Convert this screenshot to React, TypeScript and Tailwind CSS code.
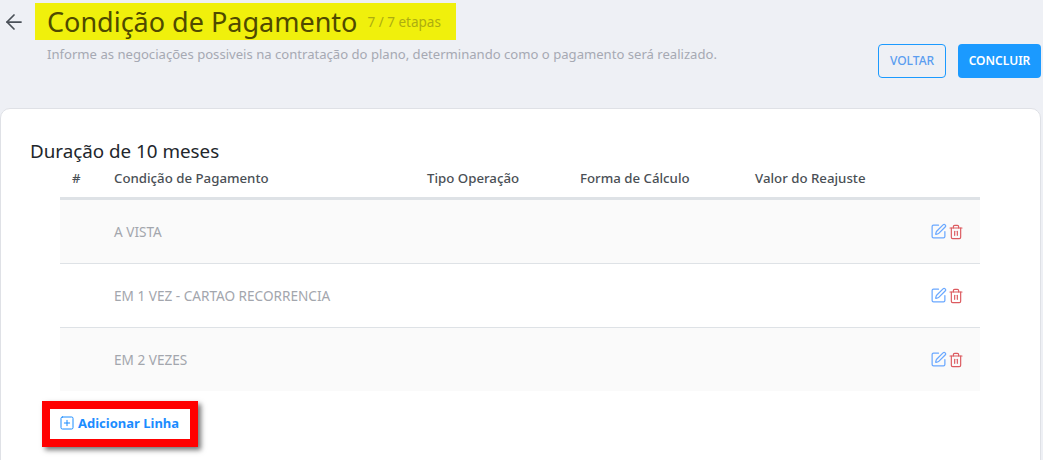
import { ArrowLeft, SquarePen, Trash2, SquarePlus } from 'lucide-react';

const rows = ['A VISTA', 'EM 1 VEZ - CARTAO RECORRENCIA', 'EM 2 VEZES'];

const gridCols = 'grid grid-cols-[42px_313px_153px_175px_1fr_70px] items-center';

export default function App() {
  return (
    <div className="w-[1043px] h-[460px] overflow-hidden bg-[#eef0f5] font-['Noto_Sans',sans-serif]">
      {/* Page header */}
      <div className="h-[108px] flex pt-[3px]">
        <ArrowLeft className="size-[24px] mt-[7px] ml-[2px] text-[#4a5058]" strokeWidth={1.75} />
        <div className="ml-[9px] w-[676px]">
          <div className="w-[421px] h-[37px] bg-[#f0f00c] pl-[12px] flex items-center">
            <h1 className="text-[27px] leading-none text-[#4f4a00]">Condição de Pagamento</h1>
            <span className="ml-[10px] mt-[1px] text-[13.5px] text-[#adad10]">7 / 7 etapas</span>
          </div>
          <p className="mt-[5px] ml-[12px] whitespace-nowrap text-[13.1px] text-[#a6a9b3]">
            Informe as negociações possiveis na contratação do plano, determinando como o pagamento será realizado.
          </p>
        </div>
        <div className="ml-[167px] mt-[41px] flex gap-[12px] items-start">
          <button className="w-[68px] h-[34px] rounded-[4px] border border-[#1b9aff] text-[12px] font-medium text-[#5a9df0]">VOLTAR</button>
          <button className="w-[83px] h-[34px] rounded-[4px] bg-[#1b9aff] text-[12px] font-semibold text-white">CONCLUIR</button>
        </div>
      </div>

      {/* Card */}
      <div className="w-[1041px] h-[400px] bg-white rounded-t-[10px] border border-[#dfe1e6] pt-[29px] pl-[29px]">
        <h2 className="text-[18.8px] leading-[26px] text-[#22262b]">Duração de 10 meses</h2>
        <div className="ml-[30px] w-[920px]">
          <div className={`${gridCols} h-[36px] pb-[3px] pl-[12px] border-b-[3px] border-[#dee2e6] text-[13.25px] font-medium text-[#4a4f55]`}>
            <span>#</span>
            <span>Condição de Pagamento</span>
            <span>Tipo Operação</span>
            <span>Forma de Cálculo</span>
            <span>Valor do Reajuste</span>
            <span />
          </div>
          {rows.map((row, i) => (
            <div
              key={row}
              className={`${gridCols} pl-[12px] text-[13.6px] text-[#a3a6ad] ${i % 2 === 0 ? 'bg-[#fafafa]' : 'bg-white'} ${i < 2 ? 'h-[64px] border-b border-[#dee2e6]' : 'h-[63px]'}`}
            >
              <span />
              <span className="whitespace-nowrap pt-[1px]">{row}</span>
              <span />
              <span />
              <span />
              <span className="flex justify-end items-center pr-[16px] gap-[1px]">
                <SquarePen className="size-[17px] text-[#6aa8ff]" strokeWidth={1.75} />
                <Trash2 className="size-[16px] text-[#dc5a5f]" strokeWidth={1.75} />
              </span>
            </div>
          ))}
        </div>
        <div className="mt-[10px] ml-[12px] w-[156px] h-[46px] border-[8px] border-[#ff0000] shadow-[3px_3px_5px_rgba(0,0,0,0.55)] flex items-center pl-[9px]">
          <SquarePlus className="size-[16px] mb-[2px] text-[#1b8cff]" strokeWidth={1.5} />
          <span className="ml-[3px] text-[13px] font-bold text-[#1b8cff]">Adicionar Linha</span>
        </div>
      </div>
    </div>
  );
}
